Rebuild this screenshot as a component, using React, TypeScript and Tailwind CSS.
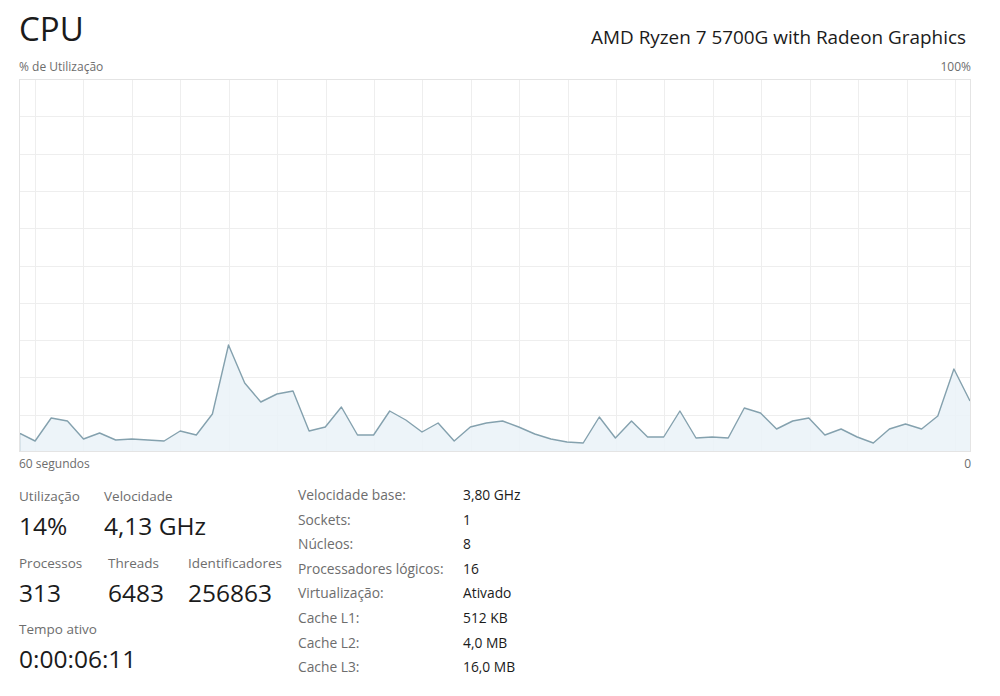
const samples = [
  354, 362, 339, 342, 360, 354, 361, 360, 361, 362,
  352, 356, 335, 266, 304, 323, 315, 312, 352, 348,
  328, 356, 356, 332, 341, 353, 344, 362, 348, 344,
  342, 348, 355, 360, 363, 364, 338, 359, 342, 358,
  358, 332, 359, 358, 359, 329, 334, 350, 342, 339,
  356, 350, 358, 364, 350, 345, 350, 337, 290, 322,
];

const W = 952;
const H = 373;

const UsageGraph = () => {
  const step = (W - 1) / (samples.length - 1);
  const pts = samples.map((y, i) => `${(i * step).toFixed(1)},${y}`);
  const line = `M0.5,${H} L0.5,${samples[0]} L${pts.join(" L")}`;
  const area = `${line} L${W - 0.5},${H} Z`;

  return (
    <svg width={W} height={H} className="block">
      {/* grid */}
      {Array.from({ length: 9 }).map((_, k) => {
        const y = Math.round((k + 1) * (H / 10)) + 0.5;
        return <line key={`h${k}`} x1={0} x2={W} y1={y} y2={y} stroke="#eeeeee" strokeWidth={1} />;
      })}
      {Array.from({ length: 20 }).map((_, k) => {
        const x = Math.round(16 + k * 48.42) + 0.5;
        return <line key={`v${k}`} x1={x} x2={x} y1={0} y2={H} stroke="#eeeeee" strokeWidth={1} />;
      })}
      <path d={area} fill="#eaf2f8" fillOpacity={0.85} />
      <path d={line} fill="none" stroke="#84a1ae" strokeWidth={1.4} strokeLinejoin="round" />
      <rect x={0.5} y={0.5} width={W - 1} height={H - 1} fill="none" stroke="#e4e4e4" />
    </svg>
  );
};

const Stat = ({ label, value, className }: { label: string; value: string; className?: string }) => (
  <div className={className}>
    <div className="text-[13.5px] leading-[22px] text-[#6d6d6d]">{label}</div>
    <div className="text-[24.5px] leading-[37px] text-[#1b1b1b]">{value}</div>
  </div>
);

const details = [
  ["Velocidade base:", "3,80 GHz"],
  ["Sockets:", "1"],
  ["Núcleos:", "8"],
  ["Processadores lógicos:", "16"],
  ["Virtualização:", "Ativado"],
  ["Cache L1:", "512 KB"],
  ["Cache L2:", "4,0 MB"],
  ["Cache L3:", "16,0 MB"],
];

export default function App() {
  return (
    <div className="w-[1000px] h-[696px] bg-white pl-[19px] pr-[29px] font-['Open_Sans',sans-serif] overflow-hidden">
      {/* header */}
      <div className="flex justify-between h-[59px]">
        <div className="pt-[9px] text-[33px] leading-[40px] text-[#1b1b1b]">CPU</div>
        <div className="pt-[25px] pr-[5px] text-[18.9px] leading-[24px] text-[#1b1b1b]">
          AMD Ryzen 7 5700G with Radeon Graphics
        </div>
      </div>

      <div className="flex justify-between h-[20px] text-[12px] leading-[16px] text-[#6d6d6d]">
        <span>% de Utilização</span>
        <span>100%</span>
      </div>

      <UsageGraph />

      <div className="flex justify-between mt-[2px] h-[20px] text-[12px] leading-[20px] text-[#6d6d6d]">
        <span>60 segundos</span>
        <span>0</span>
      </div>

      {/* stats */}
      <div className="flex mt-[9px]">
        <div className="w-[279px] pt-[2px]">
          <div className="flex mb-[8px]">
            <Stat className="w-[85px]" label="Utilização" value="14%" />
            <Stat label="Velocidade" value="4,13 GHz" />
          </div>
          <div className="flex mb-[7px]">
            <Stat className="w-[89px]" label="Processos" value="313" />
            <Stat className="w-[80px]" label="Threads" value="6483" />
            <Stat label="Identificadores" value="256863" />
          </div>
          <Stat label="Tempo ativo" value="0:00:06:11" />
        </div>

        <div className="grid grid-cols-[165px_auto] text-[13.8px] leading-[24.6px]">
          {details.map(([k, v]) => (
            <div key={k} className="contents">
              <span className="text-[#6d6d6d]">{k}</span>
              <span className="text-[#1b1b1b]">{v}</span>
            </div>
          ))}
        </div>
      </div>
    </div>
  );
}
